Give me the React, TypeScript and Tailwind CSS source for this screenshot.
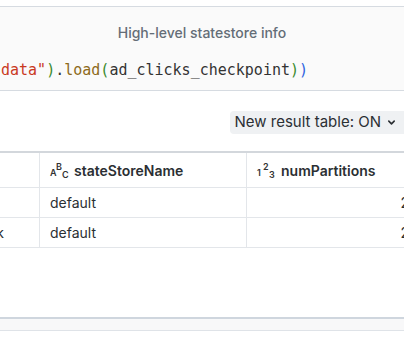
const mono = { fontFamily: '"DejaVu Sans Mono", "Liberation Mono", monospace' }

function TypeIcon({ a, b, c }: { a: string; b: string; c: string }) {
  return (
    <span className="relative inline-flex w-[18px] h-[16px] text-[9px] font-semibold leading-none text-[#333]">
      <span className="absolute left-0 bottom-[1px]">{a}</span>
      <span className="absolute left-[6px] top-0">{b}</span>
      <span className="absolute left-[12px] bottom-[-1px]">{c}</span>
    </span>
  )
}

export default function App() {
  return (
    <div className="w-[404px] h-[337px] overflow-hidden bg-white font-['Inter',sans-serif] text-[#1f2328]">
      {/* Code cell */}
      <div className="mt-[6px] h-[85px] border-y border-[#d6dbe1] bg-[#fafafa] flex flex-col">
        <div className="pt-[16px] text-center text-[14px] font-medium text-[#646d77] leading-[20px]">
          High-level statestore info
        </div>
        <div className="mt-[17px] pl-[1px] text-[15px] leading-[20px] whitespace-nowrap" style={mono}>
          <span className="text-[#c9391f]">data"</span>
          <span className="text-[#3a8a2e]">)</span>
          <span className="text-[#333]">.</span>
          <span className="text-[#8d6a1a]">load</span>
          <span className="text-[#3a8a2e]">(</span>
          <span className="text-[#333]">ad_clicks_checkpoint</span>
          <span className="text-[#3a8a2e]">)</span>
          <span className="text-[#2f63e0]">)</span>
        </div>
      </div>

      {/* Toggle */}
      <div className="flex justify-end mt-[20px]">
        <div className="h-[23px] flex items-center gap-[6px] pl-[5px] pr-[8px] rounded-l-[4px] bg-[#eff1f3] text-[15px] text-[#2b2f33] whitespace-nowrap">
          New result table: ON
          <svg width="9" height="9" viewBox="0 0 10 10" fill="none" stroke="#2b2f33" strokeWidth="1.8" strokeLinecap="round" strokeLinejoin="round">
            <path d="M2 3.5 L5 6.5 L8 3.5" />
          </svg>
        </div>
      </div>

      {/* Result table */}
      <div className="mt-[17px] border-t-2 border-[#d3d7dc] text-[14px] whitespace-nowrap">
        <div className="grid grid-cols-[40px_207px_1fr] h-[35px] border-b border-[#e3e6ea] items-stretch">
          <div className="border-r border-[#e3e6ea]" />
          <div className="flex items-center gap-[6px] pl-[10px] border-r border-[#e3e6ea] font-semibold text-[#2b2f33]">
            <TypeIcon a="A" b="B" c="C" />
            stateStoreName
          </div>
          <div className="flex items-center gap-[6px] pl-[10px] font-semibold text-[#2b2f33]">
            <TypeIcon a="1" b="2" c="3" />
            numPartitions
          </div>
        </div>
        {['', 'k'].map((first, i) => (
          <div key={i} className="grid grid-cols-[40px_207px_1fr] h-[30px] border-b border-[#e3e6ea] items-stretch text-[#2b2f33]">
            <div className="flex items-center justify-end pr-[35px] border-r border-[#e3e6ea]">{first}</div>
            <div className="flex items-center pl-[10px] border-r border-[#e3e6ea]">default</div>
            <div className="flex items-center justify-end mr-[-5px]">2</div>
          </div>
        ))}
      </div>

      {/* Bottom bar */}
      <div className="mt-[69px] h-[14px] border-t-2 border-b border-t-[#cfd6de] border-b-[#dfe3e8] bg-[#f8f8f9]" />
    </div>
  )
}
